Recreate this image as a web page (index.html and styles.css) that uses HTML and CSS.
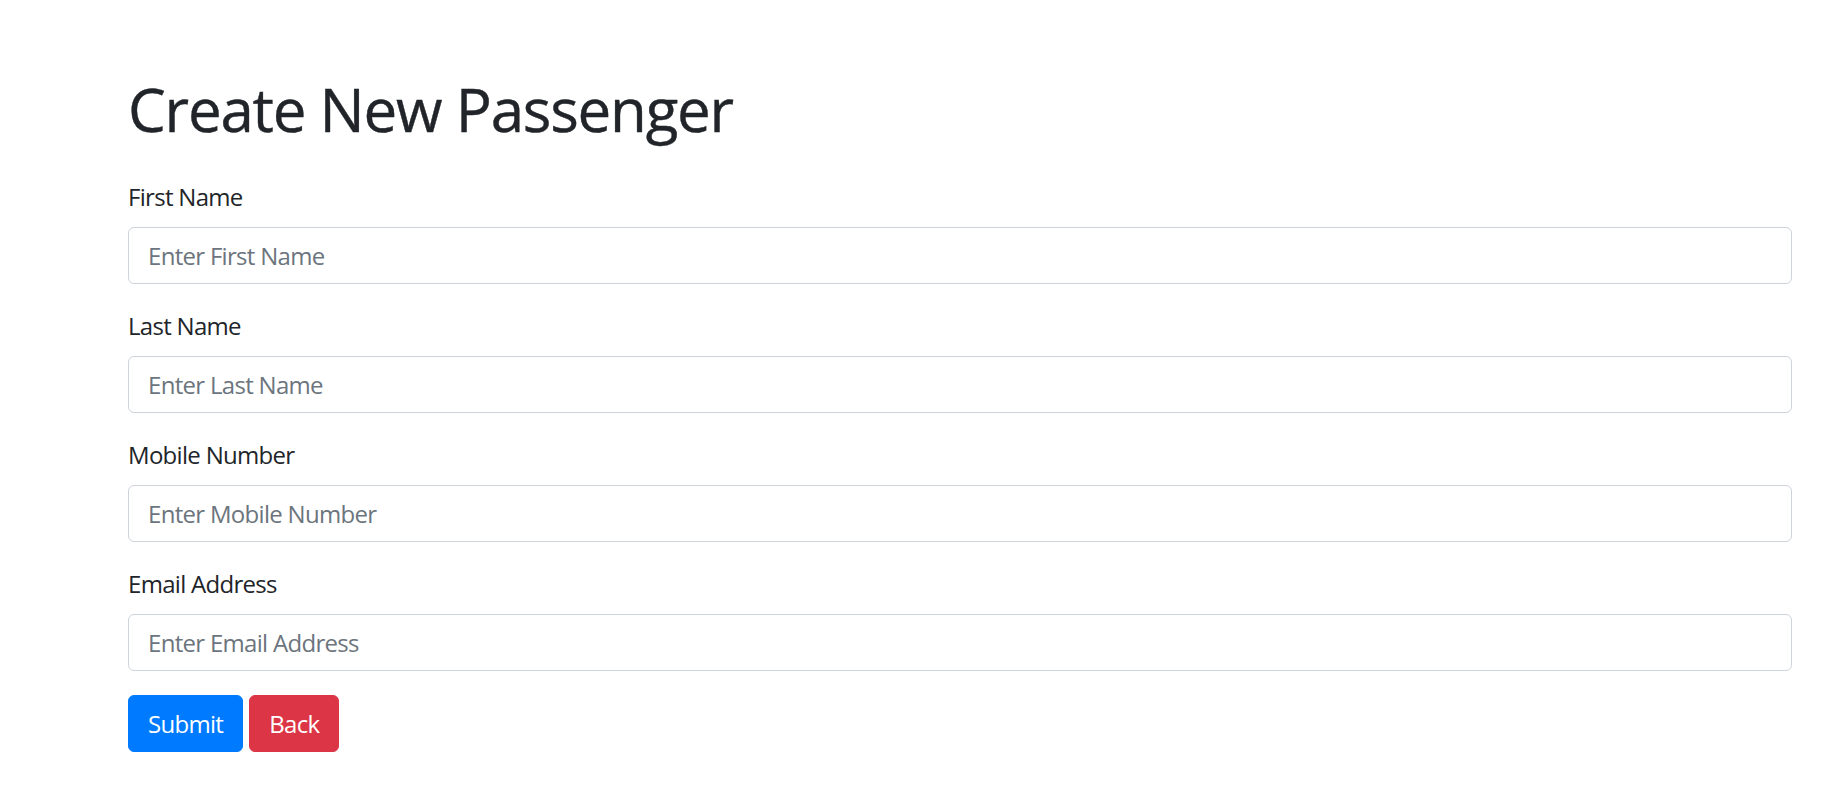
FILE: index.html
```html
<!DOCTYPE html>
<html lang="en">
<head>
<meta charset="utf-8">
<title>Create New Passenger</title>
<link rel="stylesheet" href="styles.css">
</head>
<body>
<main class="page">
  <h1 class="title">Create New Passenger</h1>
  <form class="form">
    <div class="field">
      <label class="label" for="fn">First Name</label>
      <input class="input" id="fn" type="text" placeholder="Enter First Name">
    </div>
    <div class="field">
      <label class="label" for="ln">Last Name</label>
      <input class="input" id="ln" type="text" placeholder="Enter Last Name">
    </div>
    <div class="field">
      <label class="label" for="mn">Mobile Number</label>
      <input class="input" id="mn" type="text" placeholder="Enter Mobile Number">
    </div>
    <div class="field">
      <label class="label" for="em">Email Address</label>
      <input class="input" id="em" type="text" placeholder="Enter Email Address">
    </div>
    <div class="actions">
      <button type="button" class="btn btn-primary">Submit</button>
      <button type="button" class="btn btn-danger">Back</button>
    </div>
  </form>
</main>
</body>
</html>
```
FILE: styles.css
```css
html, body {
  margin: 0;
  padding: 0;
  background: #fff;
}
body {
  font-family: "Open Sans", "Noto Sans", sans-serif;
  color: #212529;
  font-size: 24px;
  line-height: 36px;
  letter-spacing: -0.7px;
}
.page {
  padding: 73px 44px 40px 128px;
}
.title {
  margin: 0 0 34px 0;
  font-size: 60px;
  line-height: 72px;
  font-weight: 400;
  color: #212529;
  letter-spacing: -1.2px;
  -webkit-text-stroke: 0.4px #212529;
}
.form {
  display: flex;
  flex-direction: column;
}
.field {
  display: flex;
  flex-direction: column;
  margin-bottom: 24px;
}
.label {
  display: block;
  margin-bottom: 12px;
  font-size: 24px;
  line-height: 36px;
}
.input {
  box-sizing: border-box;
  width: 100%;
  height: 57px;
  margin: 0;
  padding: 0 19px;
  border: 1px solid #ced4da;
  border-radius: 6px;
  font-family: inherit;
  font-size: 24px;
  line-height: 36px;
  letter-spacing: -0.7px;
  color: #495057;
  background: #fff;
  outline: none;
}
.input::placeholder {
  color: #6c757d;
  opacity: 1;
}
.actions {
  display: flex;
  gap: 6px;
}
.btn {
  box-sizing: border-box;
  height: 57px;
  margin: 0;
  padding: 0 19px;
  border: 1px solid transparent;
  border-radius: 6px;
  font-family: inherit;
  font-size: 24px;
  line-height: 36px;
  letter-spacing: -0.7px;
  color: #fff;
  cursor: pointer;
}
.btn-primary {
  background: #007bff;
  border-color: #007bff;
}
.btn-danger {
  background: #dc3545;
  border-color: #dc3545;
}
```
